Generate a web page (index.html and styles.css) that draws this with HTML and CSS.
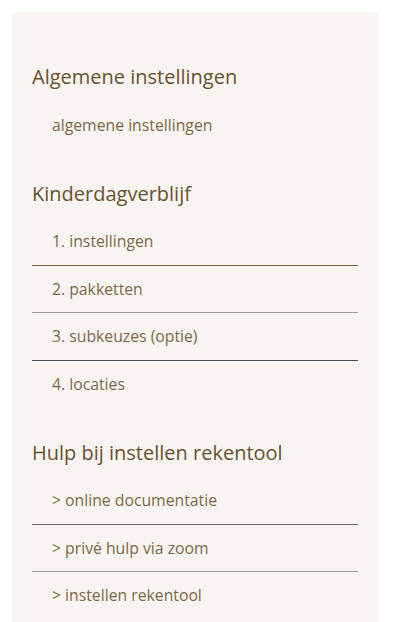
FILE: index.html
```html
<!DOCTYPE html>
<html lang="nl">
<head>
<meta charset="utf-8">
<title>Instellingen</title>
<link rel="stylesheet" href="styles.css">
</head>
<body>
<nav class="card">
  <section class="group">
    <h2 class="group-title">Algemene instellingen</h2>
    <ul class="menu">
      <li class="menu-item">algemene instellingen</li>
    </ul>
  </section>
  <section class="group">
    <h2 class="group-title">Kinderdagverblijf</h2>
    <ul class="menu">
      <li class="menu-item line-brown">1. instellingen</li>
      <li class="menu-item line-gray">2. pakketten</li>
      <li class="menu-item line-dark">3. subkeuzes (optie)</li>
      <li class="menu-item">4. locaties</li>
    </ul>
  </section>
  <section class="group">
    <h2 class="group-title">Hulp bij instellen rekentool</h2>
    <ul class="menu">
      <li class="menu-item line-mid">&gt; online documentatie</li>
      <li class="menu-item line-gray">&gt; privé hulp via zoom</li>
      <li class="menu-item">&gt; instellen rekentool</li>
    </ul>
  </section>
</nav>
</body>
</html>
```
FILE: styles.css
```css
* { box-sizing: border-box; }
html, body { margin: 0; padding: 0; background: #ffffff; }
body {
  padding: 13px 21px 0 12px;
  font-family: "Open Sans", Lato, sans-serif;
}
.card {
  background: #f9f4f1;
  border-radius: 3px 3px 0 0;
  padding: 50px 21px 30px 20px;
  min-height: 609px;
}
.group + .group { margin-top: 31.5px; }
.group-title {
  margin: 0;
  font-size: 20px;
  line-height: 28px;
  font-weight: 400;
  color: #67522f;
}
.menu {
  list-style: none;
  margin: 10.5px 0 0;
  padding: 0;
}
.menu-item {
  padding: 11.25px 0 11.25px 20px;
  font-size: 15.75px;
  line-height: 24px;
  color: #7d6849;
}
.line-brown { border-bottom: 1px solid #7a6244; }
.line-gray { border-bottom: 1px solid #98979b; }
.line-dark { border-bottom: 1px solid #4d4f5a; }
.line-mid { border-bottom: 1px solid #6e6d70; }
```
